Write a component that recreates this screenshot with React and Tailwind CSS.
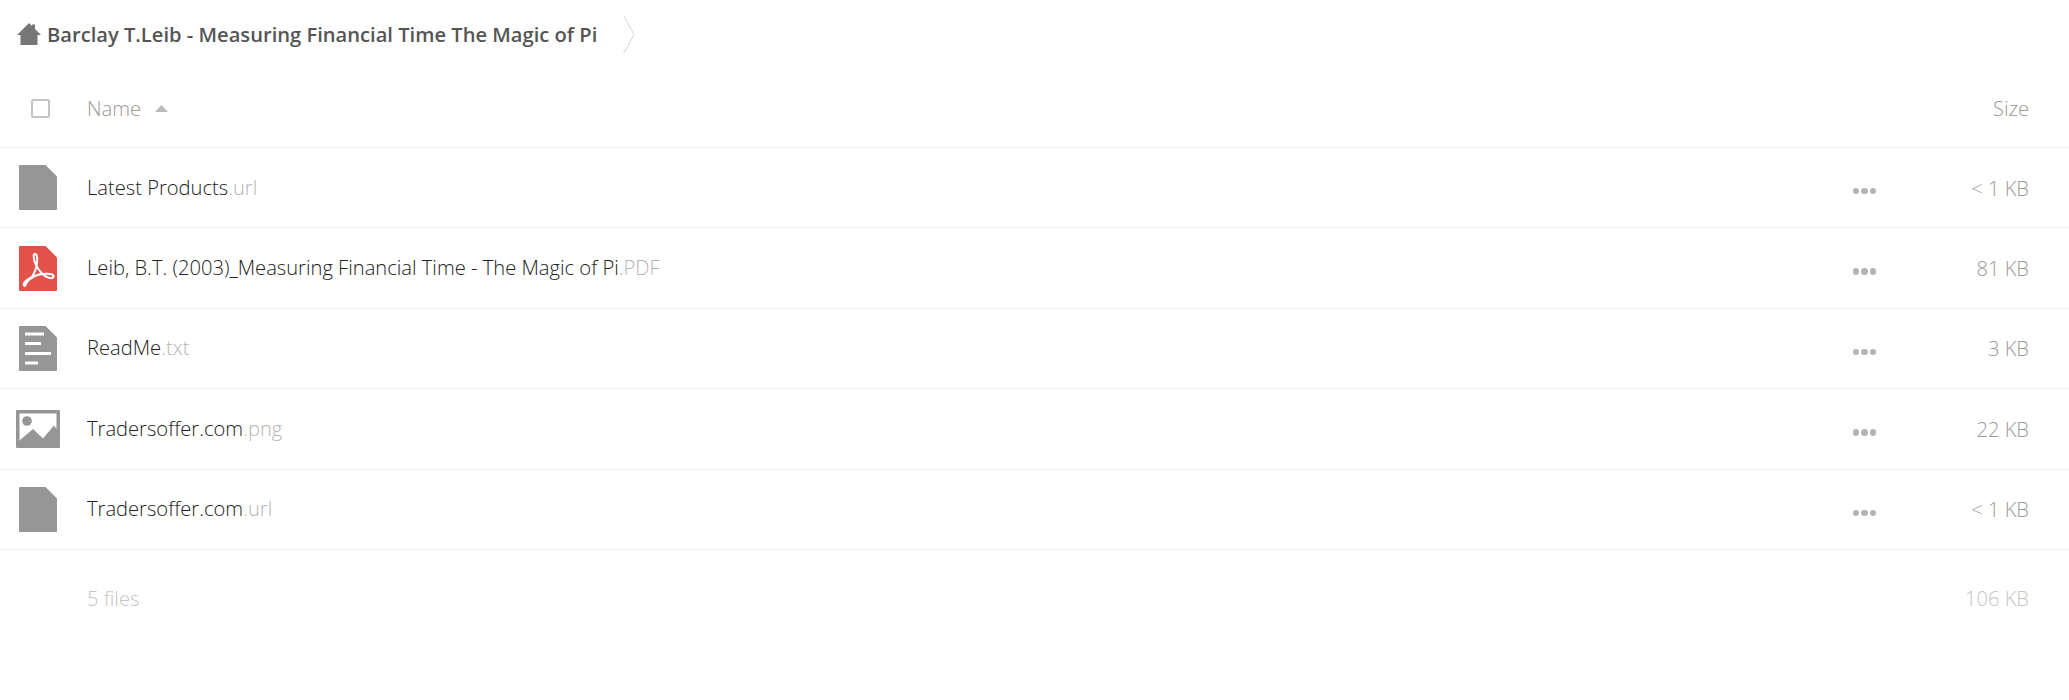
import React from 'react';

const files = [
  { name: 'Latest Products', ext: '.url', size: '< 1 KB', icon: 'file' },
  { name: 'Leib, B.T. (2003)_Measuring Financial Time - The Magic of Pi', ext: '.PDF', size: '81 KB', icon: 'pdf' },
  { name: 'ReadMe', ext: '.txt', size: '3 KB', icon: 'text' },
  { name: 'Tradersoffer.com', ext: '.png', size: '22 KB', icon: 'image' },
  { name: 'Tradersoffer.com', ext: '.url', size: '< 1 KB', icon: 'file' },
];

const sheet = 'M1 0H26.5L38 11.5V44a1 1 0 0 1-1 1H1a1 1 0 0 1-1-1V1a1 1 0 0 1 1-1Z';

function FileIcon({ type }) {
  if (type === 'image') {
    return (
      <svg width="44" height="38" viewBox="0 0 44 38">
        <path fillRule="evenodd" fill="#969696" d="M1 0H43a1 1 0 0 1 1 1V37a1 1 0 0 1-1 1H1a1 1 0 0 1-1-1V1a1 1 0 0 1 1-1ZM3.500 3.500V30.500L17 19L27 28.500L38 15.500L40.500 19V3.500Z" />
        <circle cx="11" cy="11" r="4.800" fill="#969696" />
      </svg>
    );
  }
  if (type === 'pdf') {
    return (
      <svg width="38" height="45" viewBox="0 0 38 45">
        <path fill="#e2524a" d={sheet} />
        <path fill="none" stroke="#fff" strokeWidth="2" strokeLinejoin="round" d="M5 39.500C3.500 37 8 33.500 13 31C16 26 19 18 18 11C17.500 7.500 15 6.500 14.700 9.500C14.200 15 18.500 23 23 27.500C27 31.500 33 33.500 34.500 31C35.500 28 29 26.800 21 28.300C13 30 7.500 36 6.700 38.500C6.300 40 5.500 40.300 5 39.500Z" />
      </svg>
    );
  }
  if (type === 'text') {
    return (
      <svg width="38" height="45" viewBox="0 0 38 45">
        <path fill="#969696" d={sheet} />
        <path fill="#fff" d="M6 6.500H25V9.500H6ZM6 16H22V19H6ZM6 26H32V29H6ZM6 35.500H19V38.500H6Z" />
      </svg>
    );
  }
  return (
    <svg width="38" height="45" viewBox="0 0 38 45">
      <path fill="#969696" d={sheet} />
    </svg>
  );
}

function Row({ file }) {
  return (
    <div className="flex h-[80.4px] items-center border-b border-[#eeeeee] pr-[40px]">
      <div className="flex w-[76px] shrink-0 justify-center">
        <FileIcon type={file.icon} />
      </div>
      <div className="ml-[11px] flex-1 pb-[2px] text-[20.15px] font-light text-[#222222]">
        {file.name}
        <span className="text-[#b5b5b5]">{file.ext}</span>
      </div>
      <div className="mt-[7px] flex gap-[2px]">
        <span className="h-[6.500px] w-[6.500px] rounded-full bg-[#b4b4b4]" />
        <span className="h-[6.500px] w-[6.500px] rounded-full bg-[#b4b4b4]" />
        <span className="h-[6.500px] w-[6.500px] rounded-full bg-[#b4b4b4]" />
      </div>
      <div className="w-[153px] shrink-0 text-right text-[20.15px] font-light text-[#999999]">{file.size}</div>
    </div>
  );
}

export default function App() {
  return (
    <div className="min-h-[700px] bg-white font-['Open_Sans',sans-serif]">
      <div className="flex h-[70px] items-center pl-[17px]">
        <svg width="24" height="22" viewBox="0 0 24 22" className="mb-[2px]">
          <path fill="#767676" d="M12 0L15 3V1.500H18V6L24 12H20.500V22H3.500V12H0Z" />
        </svg>
        <span className="mb-[2px] ml-[6px] text-[20.15px] font-semibold text-[#555555]">Barclay T.Leib - Measuring Financial Time The Magic of Pi</span>
        <svg width="12" height="39" viewBox="0 0 12 39" className="ml-[26px] mb-[2px]">
          <path fill="none" stroke="#d4d4d4" d="M0.500 0.500L11 19.500L0.500 38.500" />
        </svg>
      </div>
      <div className="flex h-[78px] items-center border-b border-[#eeeeee] pr-[40px]">
        <div className="ml-[31px] h-[19px] w-[19px] rounded-[2px] border-2 border-[#c4c4c4]" />
        <span className="ml-[37px] text-[20.15px] font-light text-[#999999]">Name</span>
        <svg width="13" height="7" viewBox="0 0 13 7" className="ml-[14px]">
          <path fill="#bbbbbb" d="M6.500 0L13 7H0Z" />
        </svg>
        <span className="ml-auto text-[20.15px] font-light text-[#999999]">Size</span>
      </div>
      {files.map((file, i) => (
        <Row key={i} file={file} />
      ))}
      <div className="flex items-center justify-between pt-[33px] pl-[87px] pr-[40px] text-[20.15px] font-light text-[#c4c4c4]">
        <span>5 files</span>
        <span>106 KB</span>
      </div>
    </div>
  );
}
